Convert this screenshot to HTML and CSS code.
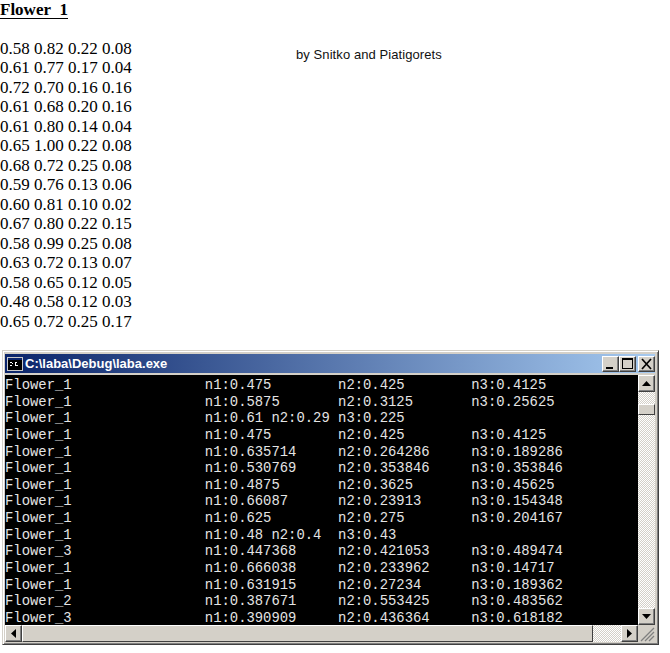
FILE: index.html
```html
<!DOCTYPE html>
<html lang="en">
<head>
<meta charset="utf-8">
<title>Flower 1</title>
<link rel="stylesheet" href="styles.css">
</head>
<body>
<header class="heading">Flower&nbsp; 1</header>
<section class="top">
<div class="data">
<div>0.58 0.82 0.22 0.08</div>
<div>0.61 0.77 0.17 0.04</div>
<div>0.72 0.70 0.16 0.16</div>
<div>0.61 0.68 0.20 0.16</div>
<div>0.61 0.80 0.14 0.04</div>
<div>0.65 1.00 0.22 0.08</div>
<div>0.68 0.72 0.25 0.08</div>
<div>0.59 0.76 0.13 0.06</div>
<div>0.60 0.81 0.10 0.02</div>
<div>0.67 0.80 0.22 0.15</div>
<div>0.58 0.99 0.25 0.08</div>
<div>0.63 0.72 0.13 0.07</div>
<div>0.58 0.65 0.12 0.05</div>
<div>0.48 0.58 0.12 0.03</div>
<div>0.65 0.72 0.25 0.17</div>
</div>
<p class="byline">by Snitko and Piatigorets</p>
</section>
<section class="window">
<div class="titlebar">
<svg class="appicon" width="16" height="14" viewBox="0 0 16 14"><rect width="16" height="14" fill="#c8c8c8"/><rect x="1" y="3" width="14" height="10" fill="#000"/><rect x="1" y="1" width="14" height="2" fill="#0a246a"/><path d="M3 5h2v1H3zM5 6h1v1H5zM3 8h2v1H3zM8 5h2v1H8zM8 8h3v1H8zM8 6h1v2H8z" fill="#fff"/></svg>
<span class="title">C:\laba\Debug\laba.exe</span>
<div class="controls">
<button class="ctl"><svg width="17" height="16" viewBox="0 0 17 16"><rect x="4" y="11" width="7" height="2" fill="#000"/></svg></button>
<button class="ctl"><svg width="17" height="16" viewBox="0 0 17 16"><path d="M3 2h11v11H3zM4 4v8h9V4z" fill="#000" fill-rule="evenodd"/></svg></button>
<button class="ctl close"><svg width="17" height="16" viewBox="0 0 17 16"><path d="M4 3l9 10M13 3l-9 10" stroke="#000" stroke-width="1.700" fill="none"/></svg></button>
</div>
</div>
<div class="client">
<pre class="console">Flower_1                n1:0.475        n2:0.425        n3:0.4125
Flower_1                n1:0.5875       n2:0.3125       n3:0.25625
Flower_1                n1:0.61 n2:0.29 n3:0.225
Flower_1                n1:0.475        n2:0.425        n3:0.4125
Flower_1                n1:0.635714     n2:0.264286     n3:0.189286
Flower_1                n1:0.530769     n2:0.353846     n3:0.353846
Flower_1                n1:0.4875       n2:0.3625       n3:0.45625
Flower_1                n1:0.66087      n2:0.23913      n3:0.154348
Flower_1                n1:0.625        n2:0.275        n3:0.204167
Flower_1                n1:0.48 n2:0.4  n3:0.43
Flower_3                n1:0.447368     n2:0.421053     n3:0.489474
Flower_1                n1:0.666038     n2:0.233962     n3:0.14717
Flower_1                n1:0.631915     n2:0.27234      n3:0.189362
Flower_2                n1:0.387671     n2:0.553425     n3:0.483562
Flower_3                n1:0.390909     n2:0.436364     n3:0.618182</pre>
<div class="vscroll">
<button class="sbtn"><svg width="9" height="5" viewBox="0 0 9 5"><path d="M4.500 0L9 5H0z" fill="#000"/></svg></button>
<div class="vtrack"><div class="vthumb"></div></div>
<button class="sbtn"><svg width="9" height="5" viewBox="0 0 9 5"><path d="M0 0h9L4.500 5z" fill="#000"/></svg></button>
</div>
<div class="hscroll">
<button class="sbtn"><svg width="5" height="9" viewBox="0 0 5 9"><path d="M5 0v9L0 4.500z" fill="#000"/></svg></button>
<div class="hthumb"></div>
<div class="htrack"></div>
<button class="sbtn"><svg width="5" height="9" viewBox="0 0 5 9"><path d="M0 0v9l5-4.500z" fill="#000"/></svg></button>
</div>
<div class="grip"><svg width="17" height="17" viewBox="0 0 17 17"><path d="M16 3L3 16M16 7L7 16M16 11L11 16" stroke="#808080" stroke-width="1.300"/></svg></div>
</div>
</section>
</body>
</html>
```
FILE: styles.css
```css
* { box-sizing: border-box; }
html, body { margin: 0; padding: 0; background: #fff; }
body { width: 670px; height: 653px; overflow: hidden; font-family: "Liberation Serif", serif; font-size: 17px; color: #000; }

.heading { display: block; width: 68px; height: 19px; font-weight: bold; line-height: 19px; border-bottom: 1px solid #000; white-space: nowrap; }

.top { display: flex; padding-top: 20px; height: 331px; }
.data { width: 296px; line-height: 19.47px; white-space: nowrap; }
.byline { margin: 8px 0 0; font-family: "Liberation Sans", sans-serif; font-size: 13px; letter-spacing: 0.08px; line-height: 15px; color: #111; white-space: nowrap; }

.window { margin-left: 2px; width: 657px; height: 295px; background: #d4d0c8; padding: 3px 3px 2px 2px;
  border-style: solid; border-width: 1px; border-color: #d4d0c8 #404040 #404040 #d4d0c8; box-shadow: inset 1px 1px 0 #fff, inset -1px -1px 0 #808080; }

.titlebar { display: flex; align-items: center; height: 19px; background: linear-gradient(to right, #0a246a, #a6caf0); padding: 0 0 0 2px; }
.appicon { flex: none; }
.title { margin-left: 2px; color: #fff; font-family: "Liberation Sans", sans-serif; font-weight: bold; font-size: 13px; line-height: 19px; white-space: nowrap; }
.controls { display: flex; margin-left: auto; }
.ctl, .sbtn { display: flex; align-items: center; justify-content: center; padding: 0; background: #d4d0c8; border-style: solid; border-width: 1px; border-color: #fff #404040 #404040 #fff; box-shadow: inset -1px -1px 0 #808080; }
.ctl { width: 17px; height: 16px; }
.ctl svg { flex: none; margin: -1px; }
.close { margin-left: 2px; }

.client { display: grid; grid-template-columns: 633px 17px; grid-template-rows: 250px 17px; margin-top: 2px; }
.console { margin: 0; padding: 2px 0 0; background: #000; color: #e4e4e4; font-family: "Liberation Mono", monospace; font-size: 13.880px; line-height: 16.640px; overflow: hidden; white-space: pre; }

.vscroll { display: flex; flex-direction: column; }
.sbtn { flex: none; width: 17px; height: 17px; }
.vtrack, .htrack { flex: 1; background: repeating-conic-gradient(#d4d0c8 0 25%, #fff 0 50%) 0 0 / 2px 2px; }
.vthumb { margin-top: 12px; height: 11px; background: #d4d0c8; border-style: solid; border-width: 1px; border-color: #fff #404040 #404040 #fff; }

.hscroll { display: flex; }
.hthumb { width: 571px; background: #d4d0c8; border-style: solid; border-width: 1px; border-color: #fff #404040 #404040 #fff; }

.grip { background: #d4d0c8; overflow: hidden; }
.grip svg { display: block; }
```
